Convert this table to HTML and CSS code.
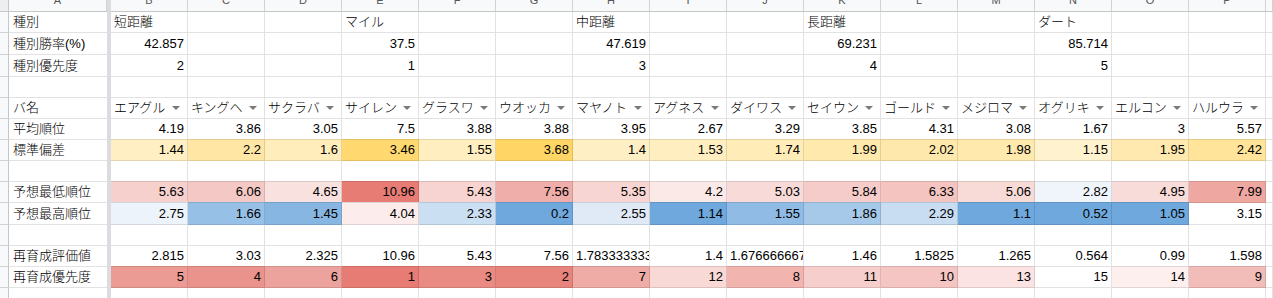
FILE: index.html
```html
<!DOCTYPE html>
<html lang="ja">
<head>
<meta charset="utf-8">
<title>Sheet</title>
<link rel="stylesheet" href="styles.css">
</head>
<body>
<div class="sheet">
  <!-- column header -->
  <div class="corner"></div><div class="ch">A</div><div class="bar"></div>
  <div class="ch">B</div><div class="ch">C</div><div class="ch">D</div><div class="ch">E</div><div class="ch">F</div><div class="ch">G</div><div class="ch">H</div><div class="ch">I</div><div class="ch">J</div><div class="ch">K</div><div class="ch">L</div><div class="ch">M</div><div class="ch">N</div><div class="ch">O</div><div class="ch">P</div><div class="ch"></div>

  <!-- row 1 -->
  <div class="rh"></div><div class="cell a">種別</div><div class="bar"></div>
  <div class="cell">短距離</div><div class="cell"></div><div class="cell"></div><div class="cell">マイル</div><div class="cell"></div><div class="cell"></div><div class="cell">中距離</div><div class="cell"></div><div class="cell"></div><div class="cell">長距離</div><div class="cell"></div><div class="cell"></div><div class="cell">ダート</div><div class="cell"></div><div class="cell"></div><div class="cell"></div>

  <!-- row 2 -->
  <div class="rh"></div><div class="cell a">種別勝率(%)</div><div class="bar"></div>
  <div class="cell n">42.857</div><div class="cell"></div><div class="cell"></div><div class="cell n">37.5</div><div class="cell"></div><div class="cell"></div><div class="cell n">47.619</div><div class="cell"></div><div class="cell"></div><div class="cell n">69.231</div><div class="cell"></div><div class="cell"></div><div class="cell n">85.714</div><div class="cell"></div><div class="cell"></div><div class="cell"></div>

  <!-- row 3 -->
  <div class="rh"></div><div class="cell a">種別優先度</div><div class="bar"></div>
  <div class="cell n">2</div><div class="cell"></div><div class="cell"></div><div class="cell n">1</div><div class="cell"></div><div class="cell"></div><div class="cell n">3</div><div class="cell"></div><div class="cell"></div><div class="cell n">4</div><div class="cell"></div><div class="cell"></div><div class="cell n">5</div><div class="cell"></div><div class="cell"></div><div class="cell"></div>

  <!-- row 4 -->
  <div class="rh"></div><div class="cell a"></div><div class="bar"></div>
  <div class="cell"></div><div class="cell"></div><div class="cell"></div><div class="cell"></div><div class="cell"></div><div class="cell"></div><div class="cell"></div><div class="cell"></div><div class="cell"></div><div class="cell"></div><div class="cell"></div><div class="cell"></div><div class="cell"></div><div class="cell"></div><div class="cell"></div><div class="cell"></div>

  <!-- row 5 -->
  <div class="rh"></div><div class="cell a">バ名</div><div class="bar"></div>
  <div class="cell f"><span>エアグル</span><i class="arr"></i></div>
  <div class="cell f"><span>キングヘ</span><i class="arr"></i></div>
  <div class="cell f"><span>サクラバ</span><i class="arr"></i></div>
  <div class="cell f"><span>サイレン</span><i class="arr"></i></div>
  <div class="cell f"><span>グラスワ</span><i class="arr"></i></div>
  <div class="cell f"><span>ウオッカ</span><i class="arr"></i></div>
  <div class="cell f"><span>マヤノト</span><i class="arr"></i></div>
  <div class="cell f"><span>アグネス</span><i class="arr"></i></div>
  <div class="cell f"><span>ダイワス</span><i class="arr"></i></div>
  <div class="cell f"><span>セイウン</span><i class="arr"></i></div>
  <div class="cell f"><span>ゴールド</span><i class="arr"></i></div>
  <div class="cell f"><span>メジロマ</span><i class="arr"></i></div>
  <div class="cell f"><span>オグリキ</span><i class="arr"></i></div>
  <div class="cell f"><span>エルコン</span><i class="arr"></i></div>
  <div class="cell f"><span>ハルウラ</span><i class="arr"></i></div>
  <div class="cell"></div>

  <!-- row 6 -->
  <div class="rh"></div><div class="cell a">平均順位</div><div class="bar"></div>
  <div class="cell n">4.19</div><div class="cell n">3.86</div><div class="cell n">3.05</div><div class="cell n">7.5</div><div class="cell n">3.88</div><div class="cell n">3.88</div><div class="cell n">3.95</div><div class="cell n">2.67</div><div class="cell n">3.29</div><div class="cell n">3.85</div><div class="cell n">4.31</div><div class="cell n">3.08</div><div class="cell n">1.67</div><div class="cell n">3</div><div class="cell n">5.57</div><div class="cell"></div>

  <!-- row 7 -->
  <div class="rh"></div><div class="cell a">標準偏差</div><div class="bar"></div>
  <div class="cell n c" style="background:#ffefc3">1.44</div>
  <div class="cell n c" style="background:#ffe6a4">2.2</div>
  <div class="cell n c" style="background:#ffedbc">1.6</div>
  <div class="cell n c" style="background:#ffd96f">3.46</div>
  <div class="cell n c" style="background:#ffeebf">1.55</div>
  <div class="cell n c" style="background:#ffd666">3.68</div>
  <div class="cell n c" style="background:#ffefc5">1.4</div>
  <div class="cell n c" style="background:#ffeebf">1.53</div>
  <div class="cell n c" style="background:#ffecb7">1.74</div>
  <div class="cell n c" style="background:#ffe9ac">1.99</div>
  <div class="cell n c" style="background:#ffe8ab">2.02</div>
  <div class="cell n c" style="background:#ffe9ad">1.98</div>
  <div class="cell n c" style="background:#fff2cf">1.15</div>
  <div class="cell n c" style="background:#ffe9ae">1.95</div>
  <div class="cell n c" style="background:#ffe49a">2.42</div>
  <div class="cell"></div>

  <!-- row 8 -->
  <div class="rh"></div><div class="cell a"></div><div class="bar"></div>
  <div class="cell"></div><div class="cell"></div><div class="cell"></div><div class="cell"></div><div class="cell"></div><div class="cell"></div><div class="cell"></div><div class="cell"></div><div class="cell"></div><div class="cell"></div><div class="cell"></div><div class="cell"></div><div class="cell"></div><div class="cell"></div><div class="cell"></div><div class="cell"></div>

  <!-- row 9 -->
  <div class="rh"></div><div class="cell a">予想最低順位</div><div class="bar"></div>
  <div class="cell n c" style="background:#f6d0cd">5.63</div>
  <div class="cell n c" style="background:#f4c9c5">6.06</div>
  <div class="cell n c" style="background:#f9e1df">4.65</div>
  <div class="cell n c" style="background:#e67c73">10.96</div>
  <div class="cell n c" style="background:#f7d4d1">5.43</div>
  <div class="cell n c" style="background:#efaea9">7.56</div>
  <div class="cell n c" style="background:#f7d5d2">5.35</div>
  <div class="cell n c" style="background:#fbe9e8">4.2</div>
  <div class="cell n c" style="background:#f8dbd8">5.03</div>
  <div class="cell n c" style="background:#f5ccc9">5.84</div>
  <div class="cell n c" style="background:#f3c4c0">6.33</div>
  <div class="cell n c" style="background:#f8dad7">5.06</div>
  <div class="cell n c" style="background:#f0f5fb">2.82</div>
  <div class="cell n c" style="background:#f8dcda">4.95</div>
  <div class="cell n c" style="background:#eea7a1">7.99</div>
  <div class="cell"></div>

  <!-- row 10 -->
  <div class="rh"></div><div class="cell a">予想最高順位</div><div class="bar"></div>
  <div class="cell n c" style="background:#ecf3fa">2.75</div>
  <div class="cell n c" style="background:#97c0e6">1.66</div>
  <div class="cell n c" style="background:#88b6e2">1.45</div>
  <div class="cell n c" style="background:#fcedec">4.04</div>
  <div class="cell n c" style="background:#cbdff2">2.33</div>
  <div class="cell n c" style="background:#6fa8dc">0.2</div>
  <div class="cell n c" style="background:#dfeaf6">2.55</div>
  <div class="cell n c" style="background:#6fa8dc">1.14</div>
  <div class="cell n c" style="background:#8fbbe4">1.55</div>
  <div class="cell n c" style="background:#a6c9e9">1.86</div>
  <div class="cell n c" style="background:#c8dcf2">2.29</div>
  <div class="cell n c" style="background:#6fa8dc">1.1</div>
  <div class="cell n c" style="background:#6fa8dc">0.52</div>
  <div class="cell n c" style="background:#6fa8dc">1.05</div>
  <div class="cell n" >3.15</div>
  <div class="cell"></div>

  <!-- row 11 -->
  <div class="rh"></div><div class="cell a"></div><div class="bar"></div>
  <div class="cell"></div><div class="cell"></div><div class="cell"></div><div class="cell"></div><div class="cell"></div><div class="cell"></div><div class="cell"></div><div class="cell"></div><div class="cell"></div><div class="cell"></div><div class="cell"></div><div class="cell"></div><div class="cell"></div><div class="cell"></div><div class="cell"></div><div class="cell"></div>

  <!-- row 12 -->
  <div class="rh"></div><div class="cell a">再育成評価値</div><div class="bar"></div>
  <div class="cell n">2.815</div><div class="cell n">3.03</div><div class="cell n">2.325</div><div class="cell n">10.96</div><div class="cell n">5.43</div><div class="cell n">7.56</div><div class="cell ovf">1.783333333</div><div class="cell n">1.4</div><div class="cell ovf">1.676666667</div><div class="cell n">1.46</div><div class="cell n">1.5825</div><div class="cell n">1.265</div><div class="cell n">0.564</div><div class="cell n">0.99</div><div class="cell n">1.598</div><div class="cell"></div>

  <!-- row 13 -->
  <div class="rh"></div><div class="cell a">再育成優先度</div><div class="bar"></div>
  <div class="cell n c" style="background:#ec9b94">5</div>
  <div class="cell n c" style="background:#ea938c">4</div>
  <div class="cell n c" style="background:#eda39d">6</div>
  <div class="cell n c" style="background:#e67c73">1</div>
  <div class="cell n c" style="background:#e98b83">3</div>
  <div class="cell n c" style="background:#e7847b">2</div>
  <div class="cell n c" style="background:#efaba6">7</div>
  <div class="cell n c" style="background:#f8d9d6">12</div>
  <div class="cell n c" style="background:#f1b4af">8</div>
  <div class="cell n c" style="background:#f6cfcc">11</div>
  <div class="cell n c" style="background:#f4c5c2">10</div>
  <div class="cell n c" style="background:#fae3e2">13</div>
  <div class="cell n">15</div>
  <div class="cell n c" style="background:#fcefee">14</div>
  <div class="cell n c" style="background:#f2bcb8">9</div>
  <div class="cell"></div>

  <!-- row 14 -->
  <div class="rh"></div><div class="cell a"></div><div class="bar"></div>
  <div class="cell"></div><div class="cell"></div><div class="cell"></div><div class="cell"></div><div class="cell"></div><div class="cell"></div><div class="cell"></div><div class="cell"></div><div class="cell"></div><div class="cell"></div><div class="cell"></div><div class="cell"></div><div class="cell"></div><div class="cell"></div><div class="cell"></div><div class="cell"></div>
</div>
</body>
</html>
```

FILE: styles.css
```css
* { box-sizing: border-box; }

html, body {
  margin: 0;
  padding: 0;
  background: #ffffff;
  overflow: hidden;
}

body {
  width: 1273px;
  height: 298px;
  font-family: "Liberation Sans", Arial, "Noto Sans CJK JP", sans-serif;
  font-size: 13px;
  font-weight: 300;
  color: #000000;
}

.sheet {
  display: grid;
  grid-template-columns: 9px 98px 4px repeat(15, 77px) 7px;
  grid-template-rows: 23px 21px 22px 22px 21px 21px 21px 21px 21px 21px 22px 21px 21px 21px 21px;
  margin-top: -11px;
}

.corner {
  background: #eceeef;
  border-right: 1px solid #c4c7c5;
  border-bottom: 1px solid #c4c7c5;
}

.ch {
  background: #f8f9fa;
  border-right: 1px solid #d0d2d4;
  border-bottom: 1px solid #c4c7c5;
  display: flex;
  align-items: center;
  justify-content: center;
  font-size: 11px;
  color: #555555;
}

.rh {
  background: #f8f9fa;
  border-right: 1px solid #c4c7c5;
  border-bottom: 1px solid #d0d2d4;
}

.bar {
  background: #dadcdf;
}

.cell {
  border-right: 1px solid rgba(0, 0, 0, 0.115);
  border-bottom: 1px solid rgba(0, 0, 0, 0.115);
  display: flex;
  align-items: center;
  padding: 0 3px;
  white-space: nowrap;
  overflow: hidden;
  line-height: 16px;
}

.cell.a {
  border-right: none;
  padding-left: 4px;
}

.n {
  justify-content: flex-end;
}

.ovf {
  justify-content: flex-start;
}

.c {
  margin-top: -1px;
  border-top: 1px solid rgba(0, 0, 0, 0.115);
}

.f {
  padding-left: 3px;
}

.arr {
  margin-left: auto;
  margin-right: 4px;
  width: 0;
  height: 0;
  border-left: 4px solid transparent;
  border-right: 4px solid transparent;
  border-top: 4px solid #7a7a7a;
  flex: none;
}
```
